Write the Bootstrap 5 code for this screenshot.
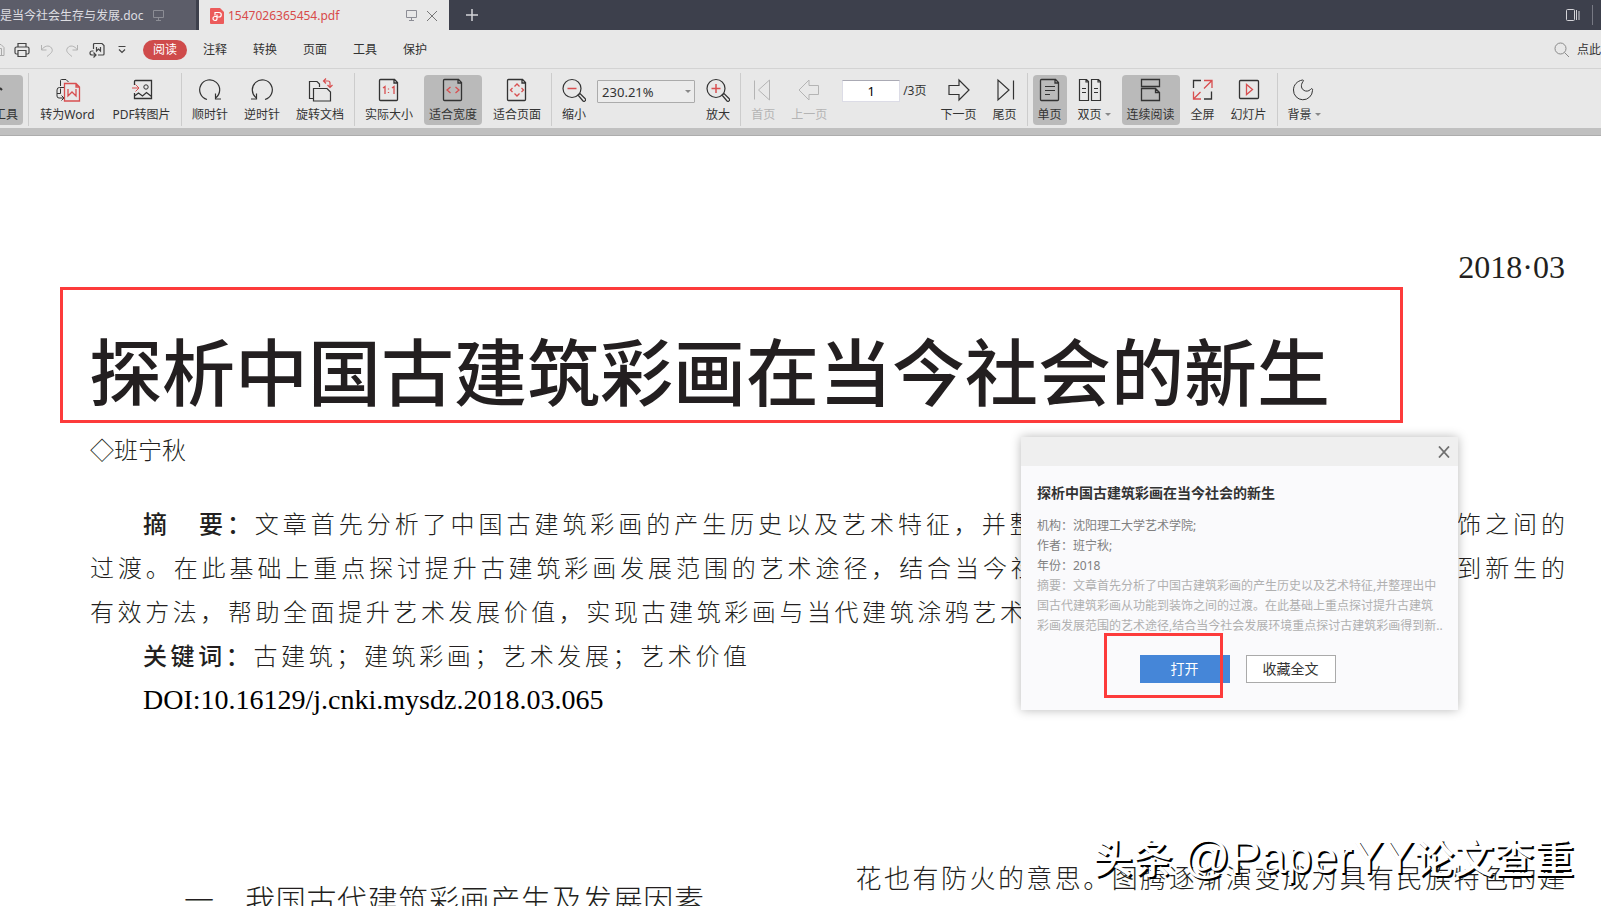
<!DOCTYPE html>
<html lang="zh-CN">
<head>
<meta charset="utf-8">
<meta name="viewport" content="width=device-width, initial-scale=1">
<title>1547026365454.pdf</title>
<link href="https://cdn.jsdelivr.net/npm/bootstrap@5.3.0/dist/css/bootstrap.min.css" rel="stylesheet">
<style>
  body { height: 100vh; overflow: hidden; background: #fff; color: #333; font-family: "Noto Sans", "Noto Sans CJK SC", sans-serif; font-size: 12px; line-height: 18px; }
  svg { fill: none; flex: none; display: block; }
  svg:not([stroke]) { stroke: currentColor; }
  button { font-family: inherit; }
  .bare { background: none; border: 0; padding: 0; color: inherit; }
  .accent { stroke: #d84f50; }

  .tabstrip { height: 30px; background: #3d404c; color: #d4d4d8; }
  .doc-tab { height: 30px; padding-top: 1px; text-decoration: none; white-space: nowrap; }
  .doc-tab-back { width: 196px; background: #5c5d69; color: #dedee2; }
  .doc-tab-front { width: 250px; margin-left: 3px; padding: 1px 11px 0; background: #e8e8e8; color: #d84a4a; }
  .muted-icon { color: #8c8d95; }

  .menubar { height: 39px; padding-top: 2px; background: #e8e8e8; border-bottom: 1px solid #d3d3d3; }
  .quick-tools { width: 140px; color: #444; gap: 9px; }
  .menu-link { width: 50px; text-align: center; text-decoration: none; color: #333; }
  .menu-link.active { width: 44px; margin: 0 3px; line-height: 20px; border-radius: 10px; background: #cf4b4b; color: #fff; }

  .ribbon { height: 59px; padding-top: 6px; background: #e8e8e8; gap: 6px; }
  .tool { height: 50px; padding: 3px 5px 1px; border-radius: 4px; color: #333; white-space: nowrap; flex: none; }
  .tool svg { margin-bottom: 4px; }
  .tool.active { background: #bababa; }
  .tool:disabled { color: #b4b4b4; }
  .tool-word { width: 67px; }
  .tool-pic { width: 69px; }
  .tool-first { width: 23px; border-radius: 0 4px 4px 0; overflow: hidden; }
  .divider { width: 1px; height: 53px; margin: -2px -1px 0; background: #cccccc; flex: none; }
  .zoom-select { width: 98px; height: 23px; margin-top: 5px; padding: 0 4px; border: 1px solid #ababab; border-radius: 1px; background: #ececec; color: #333; appearance: none; font-size: 13px; }
  .zoom-wrap::after, .caret::after { content: ""; display: inline-block; border: 3px solid transparent; border-top-color: #888; border-bottom: 0; }
  .zoom-wrap::after { position: absolute; right: 4px; top: 15px; }
  .caret::after { margin-left: 3px; vertical-align: 3px; }
  .page-field { gap: 3px; padding: 5px 3px 0 4px; white-space: nowrap; }
  .page-input { width: 58px; height: 22px; padding: 0; border: 1px solid #dcdce6; border-top-color: #aaaab4; text-align: center; color: #000; font-size: 13px; }
  .canvas-edge { height: 8px; background: #c0c0c0; border-bottom: 1px solid #adadad; }

  .paper { padding: 111px 36px 0 90px; color: #231f20; }
  .issue { font: 32px/40px "Liberation Serif", serif; text-align: right; }
  .title-frame { margin: 0 162px 0 -30px; height: 136px; padding: 38px 0 0 26px; border: 3px solid #fd3b3b; }
  .paper-title { font-size: 73px; line-height: 88px; font-weight: 500; white-space: nowrap; }
  .author { margin-top: 5px; font-size: 24px; line-height: 44px; font-weight: 300; }
  .abstract { margin-top: 30px; font-size: 24px; line-height: 44px; font-weight: 300; }
  .lead-word { font-weight: 500; }
  .spread { text-align: justify; text-align-last: justify; white-space: nowrap; }
  .indented { padding-left: 53px; }
  .partial-line { max-width: 934px; }
  .keyword-line { max-width: 657px; }
  .doi { font: 28px/44px "Liberation Serif", serif; color: #000; }
  .columns { display: grid; grid-template-columns: 1fr 1fr; column-gap: 56px; margin-top: 136px; font-size: 26px; line-height: 40px; font-weight: 300; }
  .section-title { max-width: 614px; margin-top: 22px; padding-left: 94px; font-size: 30px; line-height: 40px; font-weight: 300; }

  .popup { position: absolute; left: 1021px; top: 437px; width: 437px; height: 273px; background: #fafafc; box-shadow: 0 0 10px rgba(0,0,0,.28); color: #808080; }
  .popup-bar { height: 29px; background: #efefef; color: #707070; padding-right: 8px; }
  .popup-body { padding: 17px 20px 0 16px; line-height: 20px; }
  .popup-title { font-size: 14px; line-height: 20px; font-weight: 700; color: #333; margin-bottom: 13px; }
  .faint { color: #b0b0b0; white-space: nowrap; }
  .popup-actions { padding-top: 19px; }
  .popup-btn { width: 90px; height: 28px; padding: 0; border-radius: 0; font-size: 14px; line-height: 20px; }
  .btn-open { background: #4586d8; color: #fff; border: 0; }
  .btn-keep { background: #fff; color: #333; border: 1px solid #aaa; }
  .click-mark { position: absolute; left: 83px; top: 196px; width: 119px; height: 65px; border: 3px solid #fd3b3b; pointer-events: none; }
  .watermark { position: absolute; right: 27px; bottom: 20px; font-size: 40px; line-height: 56px; color: #fff; font-weight: 500; text-shadow: 2px 2px 0 #000; white-space: nowrap; }
  .watermark-latin { font-family: "Liberation Sans", sans-serif; font-size: 46px; font-weight: 400; }
</style>
</head>
<body class="position-relative">

<header>
  <nav class="tabstrip d-flex align-items-center" aria-label="文档标签">
    <a href="#" class="doc-tab doc-tab-back d-flex align-items-center">是当今社会生存与发展.doc
      <svg class="ms-2 muted-icon" width="13" height="13" viewBox="0 0 13 13"><path d="M1.5 1.5h10v7h-10zM6.500 8.500v3M4 11.500h5"/></svg></a>
    <a href="#" class="doc-tab doc-tab-front d-flex align-items-center">
      <svg class="me-1" width="14" height="16" viewBox="0 0 14 16"><path d="M1 0h9l4 4v11a1 1 0 0 1-1 1H1a1 1 0 0 1-1-1V1a1 1 0 0 1 1-1z" fill="#ec5b5b" stroke="none"/><path d="M5 7.500V4.500h4a2 2 0 0 1 0 4.500H7v1.500a2 2 0 1 1-2-2h2V6.500" stroke="#fff" stroke-width="1.200"/></svg>
      <span>1547026365454.pdf</span>
      <svg class="ms-auto me-2 muted-icon" width="13" height="13" viewBox="0 0 13 13"><path d="M1.500 1.500h10v7h-10zM6.500 8.500v3M4 11.500h5"/></svg>
      <svg width="12" height="12" viewBox="0 0 12 12" stroke="#777"><path d="M1 1l10 10M11 1L1 11"/></svg></a>
    <button class="bare ms-3" aria-label="新建标签"><svg width="14" height="14" viewBox="0 0 14 14" stroke-width="1.500"><path d="M7 1v12M1 7h12"/></svg></button>
    <button class="bare ms-auto me-2 pe-1" aria-label="侧栏"><svg width="14" height="14" viewBox="0 0 14 14"><rect x=".5" y="1.500" width="8" height="11" rx="1"/><path d="M10.500 2v10M13 3v9"/></svg></button>
    <svg class="me-2" width="1" height="20" viewBox="0 0 1 20" stroke="#777983"><path d="M.5 0v20"/></svg>
  </nav>

  <div class="menubar d-flex align-items-center">
    <div class="quick-tools d-flex align-items-center flex-shrink-0">
      <svg width="5" height="16" viewBox="0 0 5 16" stroke="#aaa"><path d="M0 2.500h1l3 3v8H0M0 6.500h1.500v7"/></svg>
      <svg width="16" height="16" viewBox="0 0 16 16" stroke-width="1.200"><path d="M4 5V1.500h8V5M4 12H2.500A1.500 1.500 0 0 1 1 10.500v-4A1.500 1.500 0 0 1 2.500 5h11A1.500 1.500 0 0 1 15 6.500v4a1.500 1.500 0 0 1-1.500 1.500H12M4 8.500h8v6H4z"/></svg>
      <svg width="16" height="16" viewBox="0 0 16 16" stroke="#b2b2b2"><path d="M2.500 3v5h5M2.500 8C5 4 10 2.500 12.500 6S11 12 8 14.500"/></svg>
      <svg width="16" height="16" viewBox="0 0 16 16" stroke="#b2b2b2"><path d="M13.500 3v5h-5M13.500 8C11 4 6 2.500 3.500 6S5 12 8 14.500"/></svg>
      <svg width="16" height="16" viewBox="0 0 16 16" stroke-width="1.200"><path d="M4.500 7V2.500a1 1 0 0 1 1-1H13l2 2V12a1 1 0 0 1-1 1H9M7.500 5v4l2-2 2 2V5M4.500 9H3a2 2 0 0 0 0 4h3.500M4.500 10.500L7 13l-2.500 2.500"/></svg>
      <svg width="16" height="10" viewBox="0 0 16 10" stroke-width="1.200"><path d="M4.500 1.500h7M5 4.500L8 7.500l3-3"/></svg>
    </div>
    <nav class="d-flex align-items-center" aria-label="菜单">
      <a href="#" class="menu-link active">阅读</a>
      <a href="#" class="menu-link">注释</a>
      <a href="#" class="menu-link">转换</a>
      <a href="#" class="menu-link">页面</a>
      <a href="#" class="menu-link">工具</a>
      <a href="#" class="menu-link">保护</a>
    </nav>
    <button class="bare ms-auto d-flex align-items-center text-nowrap"><svg class="me-2" width="15" height="16" viewBox="0 0 15 16" stroke="#8a8a8a"><circle cx="6.500" cy="6.500" r="5.500"/><path d="M10.500 10.500l4.500 4.500"/></svg>点此</button>
  </div>

  <div class="ribbon d-flex align-items-start" role="toolbar" aria-label="阅读工具">
    <button class="bare tool tool-first active d-flex flex-column align-items-end" aria-pressed="true"><svg width="18" height="24" viewBox="0 0 18 24"><path d="M0 10l2 2" stroke-width="2"/></svg>工具</button>
    <div class="divider"></div>
    <button class="bare tool tool-word d-flex flex-column align-items-center"><svg width="26" height="24" viewBox="0 0 26 24"><path d="M5.500 8V2.500a1 1 0 0 1 1-1H11l2.500 2.500M9 9.500H4.500A2.500 2.500 0 0 0 2 12v6a2 2 0 0 0 2 2h5M2 15.500h3.500v-5M6.500 17.500L9 20l-2.500 2.500"/><path class="accent" stroke-width="1.300" d="M9.500 5.500H21l3.500 3.500v14h-15zM13 11v7l4-4 4 4v-7M21 5.500V9h3.500"/></svg>转为Word</button>
    <button class="bare tool tool-pic d-flex flex-column align-items-center"><svg width="24" height="24" viewBox="0 0 24 24"><path d="M4.500 7V3.500a1 1 0 0 1 1-1h16v18h-17V15M4.500 18l4-3 4 3 4-3.500 5 4" stroke-width="1.300"/><circle cx="16" cy="9" r="2.200"/><path class="accent" d="M2 10h6.500M5.500 6.500L9 10l-3.500 3.500"/></svg>PDF转图片</button>
    <div class="divider"></div>
    <button class="bare tool d-flex flex-column align-items-center"><svg width="24" height="24" viewBox="0 0 24 24" stroke-width="1.200"><path d="M9 21.500a10 10 0 1 1 8.500-1.500M17.500 15.500V21H23"/></svg>顺时针</button>
    <button class="bare tool d-flex flex-column align-items-center"><svg width="24" height="24" viewBox="0 0 24 24" stroke-width="1.200"><path d="M15 21.500A10 10 0 1 0 6.500 20M6.500 15.500V21H1"/></svg>逆时针</button>
    <button class="bare tool d-flex flex-column align-items-center"><svg width="26" height="24" viewBox="0 0 26 24" stroke-width="1.200"><path d="M6 20.500H2.500v-17H10L12.500 6v3M6.500 10.500H20l3.500 3.500v9h-17z"/><path class="accent" d="M19 .5L16.500 3 19 5.500M16.500 3H21a2 2 0 0 1 2 2v4M20.500 7L23 9.500 25.500 7"/></svg>旋转文档</button>
    <div class="divider"></div>
    <button class="bare tool d-flex flex-column align-items-center"><svg width="24" height="24" viewBox="0 0 24 24" stroke-width="1.300"><path d="M2.500 2.500a1 1 0 0 1 1-1h14l3 3v17a1 1 0 0 1-1 1h-16a1 1 0 0 1-1-1zM17 1.500v3.500h3.500"/><path class="accent" d="M6 10l2-1.500V16M11.500 10.500v1M11.500 14v1M15 10l2-1.500V16"/></svg>实际大小</button>
    <button class="bare tool active d-flex flex-column align-items-center" aria-pressed="true"><svg width="24" height="24" viewBox="0 0 24 24" stroke-width="1.300"><path d="M2.500 2.500a1 1 0 0 1 1-1h14l3 3v17a1 1 0 0 1-1 1h-16a1 1 0 0 1-1-1zM17 1.500v3.500h3.500"/><path class="accent" d="M9.500 9L6 12l3.500 3M14.500 9l3.500 3-3.500 3"/></svg>适合宽度</button>
    <button class="bare tool d-flex flex-column align-items-center"><svg width="24" height="24" viewBox="0 0 24 24" stroke-width="1.300"><path d="M2.500 2.500a1 1 0 0 1 1-1h14l3 3v17a1 1 0 0 1-1 1h-16a1 1 0 0 1-1-1zM17 1.500v3.500h3.500"/><path class="accent" d="M9.500 8.500l2.500-2.500 2.500 2.500M9.500 15.500L12 18l2.500-2.500M7.500 10L5.500 12l2 2M16.500 10l2 2-2 2"/></svg>适合页面</button>
    <div class="divider"></div>
    <button class="bare tool d-flex flex-column align-items-center"><svg width="24" height="24" viewBox="0 0 24 24" stroke-width="1.200"><circle cx="10" cy="10.500" r="9"/><path d="M16 17l2-1.500 5 5a1.500 1.500 0 0 1-2 2.500z"/><path class="accent" stroke-width="1.500" d="M5.500 10.500h9"/></svg>缩小</button>
    <div class="zoom-wrap position-relative"><select class="zoom-select" aria-label="缩放比例"><option>230.21%</option></select></div>
    <button class="bare tool d-flex flex-column align-items-center"><svg width="24" height="24" viewBox="0 0 24 24" stroke-width="1.200"><circle cx="10" cy="10.500" r="9"/><path d="M16 17l2-1.500 5 5a1.500 1.500 0 0 1-2 2.500z"/><path class="accent" stroke-width="1.500" d="M5.500 10.500h9M10 6v9"/></svg>放大</button>
    <div class="divider"></div>
    <button class="bare tool d-flex flex-column align-items-center" disabled><svg width="24" height="24" viewBox="0 0 24 24"><path d="M3.500 2.500v19M18.500 2v20L7.500 12z"/></svg>首页</button>
    <button class="bare tool d-flex flex-column align-items-center" disabled><svg width="24" height="24" viewBox="0 0 24 24"><path d="M2 12L12 2v5.500h9.500v9H12V22z"/></svg>上一页</button>
    <label class="page-field d-flex align-items-center"><input class="page-input" type="text" value="1" aria-label="页码"><span>/3页</span></label>
    <button class="bare tool d-flex flex-column align-items-center"><svg width="24" height="24" viewBox="0 0 24 24" stroke-width="1.200"><path d="M22 12L12 2v5.500H2v9h10V22z"/></svg>下一页</button>
    <button class="bare tool d-flex flex-column align-items-center"><svg width="24" height="24" viewBox="0 0 24 24" stroke-width="1.200"><path d="M20.500 2.500v19M5 2v20L16 12z"/></svg>尾页</button>
    <div class="divider"></div>
    <button class="bare tool active d-flex flex-column align-items-center" aria-pressed="true"><svg width="24" height="24" viewBox="0 0 24 24" stroke-width="1.300"><path d="M2.500 2.500a1 1 0 0 1 1-1h14l3 3v17a1 1 0 0 1-1 1h-16a1 1 0 0 1-1-1zM17 1.500v3.500h3.500"/><path stroke-width="1" d="M7 8.500h10M7 12.500h10M7 16.500h5"/></svg>单页</button>
    <button class="bare tool d-flex flex-column"><svg width="24" height="24" viewBox="0 0 24 24" stroke-width="1.200"><path d="M1.500 1.500h7l2 2v19h-9zM8 1.500V4h2.500M13.500 1.500h7l2 2v19h-9zM20 1.500V4h2.500"/><path stroke-width="1" d="M4 10.500h4M4 14.500h4M16 10.500h4M16 14.500h4"/></svg><span class="caret">双页</span></button>
    <button class="bare tool active d-flex flex-column align-items-center" aria-pressed="true"><svg width="24" height="24" viewBox="0 0 24 24" stroke-width="1.300"><path d="M2.500 1.500h18v7h-18zM2.500 22.500v-12h14l4 4v8zM16.500 10.500v4h4"/></svg>连续阅读</button>
    <button class="bare tool d-flex flex-column align-items-center"><svg width="24" height="24" viewBox="0 0 24 24" stroke-width="1.300"><path d="M2.500 10V2.500H10M13 21h7.500v-7.500"/><path class="accent" d="M13 2.500h8V10M20.500 3L13 10.500M2.500 13.500v7.500H10M3 20.500L9.500 14"/></svg>全屏</button>
    <button class="bare tool d-flex flex-column align-items-center"><svg width="24" height="24" viewBox="0 0 24 24" stroke-width="1.300"><rect x="2.500" y="2.500" width="19" height="18" rx="1"/><path class="accent" d="M9.500 6.500v10l6-5z"/></svg>幻灯片</button>
    <div class="divider"></div>
    <button class="bare tool d-flex flex-column"><svg class="ms-1" width="24" height="24" viewBox="0 0 24 24"><path d="M10.500 2C5 3 1.500 7 1.500 12a9.500 9.500 0 0 0 19 .5c.5-2-1-2.500-2-1C14 16 6 10.500 11 3.500c.7-1 .5-1.700-.5-1.500z"/></svg><span class="caret">背景</span></button>
  </div>
  <div class="canvas-edge"></div>
</header>

<main class="paper">
  <div class="issue">2018·03</div>
  <div class="title-frame"><h1 class="paper-title m-0">探析中国古建筑彩画在当今社会的新生</h1></div>
  <div class="author">◇班宁秋</div>
  <section class="abstract">
    <div class="spread indented"><b class="lead-word">摘　要：</b>文章首先分析了中国古建筑彩画的产生历史以及艺术特征，并整理出中国古代建筑彩画从功能到装饰之间的</div>
    <div class="spread">过渡。在此基础上重点探讨提升古建筑彩画发展范围的艺术途径，结合当今社会发展环境重点探讨古建筑彩画得到新生的</div>
    <div class="spread partial-line">有效方法，帮助全面提升艺术发展价值，实现古建筑彩画与当代建筑涂鸦艺术</div>
    <div class="spread indented keyword-line"><b class="lead-word">关键词：</b>古建筑；建筑彩画；艺术发展；艺术价值</div>
    <div class="indented doi">DOI:10.16129/j.cnki.mysdz.2018.03.065</div>
  </section>
  <div class="columns">
    <h2 class="section-title spread mb-0">一　我国古代建筑彩画产生及发展因素</h2>
    <div class="spread">花也有防火的意思。图腾逐渐演变成为具有民族特色的建</div>
  </div>
</main>

<div class="watermark">头条 <span class="watermark-latin">@PaperYY</span>论文查重</div>

<section class="popup" role="dialog" aria-labelledby="popup-title">
  <div class="popup-bar d-flex align-items-center justify-content-end">
    <button class="bare" aria-label="关闭"><svg width="12" height="12" viewBox="0 0 12 12" stroke-width="1.800"><path d="M1 0.500l10 11M11 .5L1 11.500"/></svg></button>
  </div>
  <div class="popup-body">
    <h2 class="popup-title" id="popup-title">探析中国古建筑彩画在当今社会的新生</h2>
    <div>机构：沈阳理工大学艺术学院;</div>
    <div>作者：班宁秋;</div>
    <div>年份：2018</div>
    <div class="faint">摘要：文章首先分析了中国古建筑彩画的产生历史以及艺术特征,并整理出中<br>国古代建筑彩画从功能到装饰之间的过渡。在此基础上重点探讨提升古建筑<br>彩画发展范围的艺术途径,结合当今社会发展环境重点探讨古建筑彩画得到新..</div>
    <div class="popup-actions d-flex justify-content-center gap-3"><button class="btn popup-btn btn-open">打开</button><button class="btn popup-btn btn-keep">收藏全文</button></div>
  </div>
  <div class="click-mark"></div>
</section>

<script src="https://cdn.jsdelivr.net/npm/bootstrap@5.3.0/dist/js/bootstrap.bundle.min.js"></script>
</body>
</html>
